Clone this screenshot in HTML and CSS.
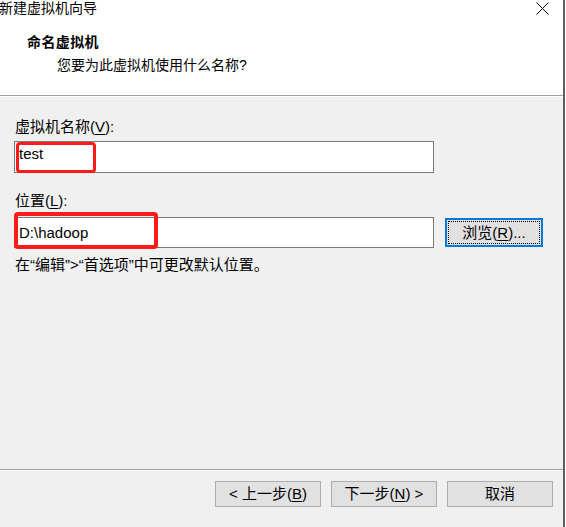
FILE: index.html
```html
<!DOCTYPE html>
<html lang="zh-CN">
<head>
<meta charset="utf-8">
<title>新建虚拟机向导</title>
<link rel="stylesheet" href="styles.css">
</head>
<body>
<div class="window">
  <div class="header">
    <div class="titlebar">
      <span class="title">新建虚拟机向导</span>
      <svg class="close" width="13" height="13" viewBox="0 0 13 13"><path d="M0.5 0.5 L12.5 12.5 M12.5 0.5 L0.5 12.5" stroke="#000" stroke-width="1" fill="none"/></svg>
    </div>
    <div class="heading">命名虚拟机</div>
    <div class="subheading">您要为此虚拟机使用什么名称?</div>
  </div>
  <div class="content">
    <div class="label first">虚拟机名称(<u>V</u>):</div>
    <div class="input wide">
      <span class="value">test</span>
      <span class="mark mark1"></span>
    </div>
    <div class="label second">位置(<u>L</u>):</div>
    <div class="row">
      <div class="input loc">
        <span class="value">D:\hadoop</span>
        <span class="mark mark2"></span>
      </div>
      <div class="btn browse">浏览(<u>R</u>)...</div>
    </div>
    <div class="note">在“编辑”&gt;“首选项”中可更改默认位置。</div>
  </div>
  <div class="footer">
    <div class="btn">&lt; 上一步(<u>B</u>)</div>
    <div class="btn">下一步(<u>N</u>) &gt;</div>
    <div class="btn">取消</div>
  </div>
</div>
</body>
</html>
```

FILE: styles.css
```css
html, body {
  margin: 0;
  padding: 0;
  background: #ffffff;
  width: 566px;
  height: 527px;
  overflow: hidden;
}
body {
  font-family: "Liberation Sans", "Noto Sans CJK SC", sans-serif;
  font-size: 15px;
  color: #000;
}
.window {
  width: 563px;
  height: 527px;
  border-right: 2px solid #5f5f5f;
  background: #f0f0f0;
  display: flex;
  flex-direction: column;
}
.header {
  background: #ffffff;
  height: 95px;
  border-bottom: 1px solid #a0a0a0;
  box-shadow: 0 1px 0 #ffffff;
  position: relative;
  flex: none;
}
.titlebar {
  height: 16px;
  display: flex;
  align-items: center;
  justify-content: space-between;
  padding-left: 0;
  padding-right: 14px;
}
.title {
  font-size: 14px;
  line-height: 16px;
  margin-left: -1px;
}
.close {
  display: block;
  margin-top: 0px;
}
.heading {
  font-weight: bold;
  font-size: 14px;
  letter-spacing: 0.4px;
  line-height: 16px;
  margin-top: 18px;
  padding-left: 27px;
}
.subheading {
  font-size: 14px;
  line-height: 16px;
  margin-top: 7px;
  padding-left: 57px;
}
.content {
  padding: 0 0 0 14px;
  margin-top: 1px;
  flex: 1;
}
.label {
  line-height: 16px;
  padding-left: 1px;
}
.label.first { margin-top: 22px; }
.label.second { margin-top: 20px; }
u { text-decoration: underline; text-underline-offset: 2px; }
.input {
  position: relative;
  box-sizing: border-box;
  background: #ffffff;
  border: 1px solid #7a7a7a;
  display: flex;
  align-items: center;
}
.input .value {
  font-size: 15px;
  padding-left: 4px;
  line-height: 18px;
}
.wide {
  width: 420px;
  height: 32px;
  margin-top: 6px;
  align-items: flex-start;
  padding-top: 3px;
}
.row {
  display: flex;
  align-items: flex-start;
  margin-top: 8px;
}
.loc {
  width: 420px;
  height: 31px;
}
.mark {
  position: absolute;
  box-sizing: border-box;
  border: 3px solid #ff1a1a;
  border-radius: 4px;
}
.mark1 {
  left: 1px;
  top: 0px;
  width: 80px;
  height: 31px;
}
.mark2 {
  left: -1px;
  top: -6px;
  width: 144px;
  height: 37px;
  border-width: 4px;
}
.btn {
  box-sizing: border-box;
  background: #e1e1e1;
  border: 1px solid #adadad;
  display: flex;
  align-items: center;
  justify-content: center;
  font-size: 15px;
  line-height: 16px;
}
.browse {
  margin-left: 11px;
  margin-top: 1px;
  width: 98px;
  height: 29px;
  border: 2px solid #0078d7;
  outline: 1px dotted #000;
  outline-offset: -4px;
}
.note {
  margin-top: 9px;
  padding-left: 1px;
  line-height: 16px;
}
.footer {
  flex: none;
  height: 46px;
  border-top: 1px solid #a0a0a0;
  box-shadow: inset 0 1px 0 #ffffff;
  display: flex;
  justify-content: flex-end;
  gap: 10px;
  padding: 11px 10px 0 0;
  box-sizing: content-box;
}
.footer .btn {
  width: 106px;
  height: 26px;
}
```
